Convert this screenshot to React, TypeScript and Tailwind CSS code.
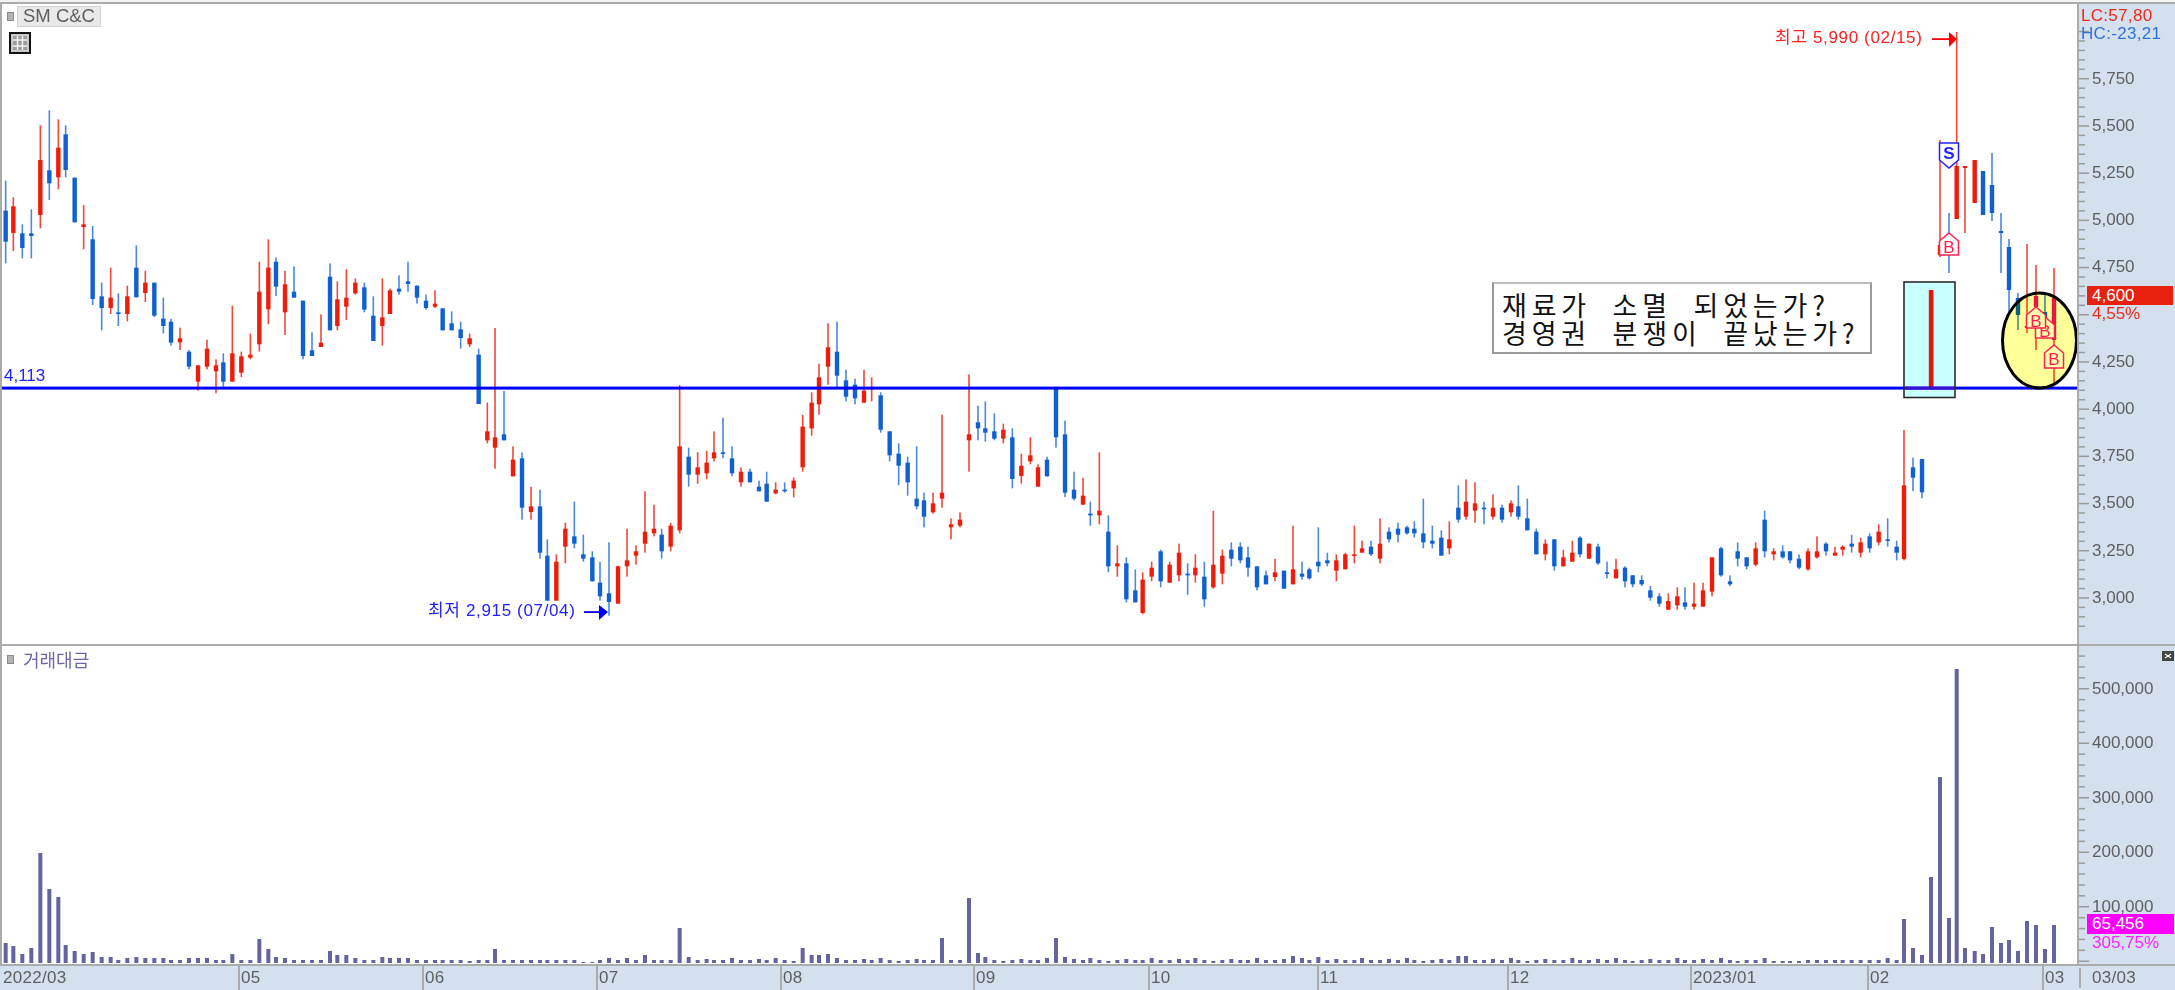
import React from "react";

type Row = number[];
type Candle = { x: number; h: number; t: number; b: number; l: number; c: number };

const seg = (ox: number, oy: number, rows: Row[]): Candle[] =>
  rows.map(([x, h, t, b, l, c]) => ({ x: ox + x / 3, h: oy + h / 3, t: oy + t / 3, b: oy + b / 3, l: oy + l / 3, c }));

const raw = (rows: Row[]): Candle[] => rows.map(([x, h, t, b, l, c]) => ({ x, h, t, b, l, c }));

const candles: Candle[] = [
  ...seg(0, 100, [
    [17,242,332,425,490,0],[40,292,319,399,453,1],[67,373,400,444,475,0],[94,328,400,408,475,0],[121,76,180,345,385,1],
    [148,31,211,250,300,0],[175,58,143,232,268,1],[197,76,103,210,232,0],[224,233,233,367,367,0],[251,315,373,381,448,1],
    [278,378,418,597,615,0],[305,548,589,624,691,0],[332,503,593,624,642,1],[355,580,637,641,678,0],[382,557,589,642,664,1],
    [409,436,503,592,592,0],[436,512,548,579,606,1],[463,548,548,647,651,0],[490,593,656,678,700,0],[513,656,665,728,737,0],
    [540,683,715,727,750,1],[567,750,755,800,808,0],[594,796,796,845,872,1],[621,719,746,800,808,1],[648,778,796,814,880,1],
    [670,760,787,845,860,0],[697,617,760,845,845,1],[724,755,769,818,831,1],[751,701,764,773,778,1],[778,485,575,733,755,1],
    [805,418,503,628,673,1],[828,472,485,560,588,0],[855,512,553,637,705,1],[882,499,575,593,593,0],[909,602,602,768,778,0],
    [936,697,751,768,768,0],[963,643,728,741,741,1],[990,490,530,691,691,0],[1012,544,598,678,691,1],[1039,508,593,620,660,1],
    [1066,535,548,580,584,1],[1093,548,562,629,637,0],[1120,589,647,723,723,0],[1147,535,652,678,737,1],[1170,566,571,642,642,1],
    [1197,526,566,575,584,0],[1224,485,544,552,575,0],[1251,557,557,593,611,0],[1278,584,602,624,629,0],[1305,571,611,620,624,1],
    [1328,625,625,691,691,0],[1355,634,670,691,691,0],[1382,665,688,714,746,0],[1409,701,715,733,741,1],[1436,746,764,912,912,0],
  ]),
  ...seg(440, 310, [
    [142,278,364,391,400,1],[165,54,382,413,476,1],[192,243,373,391,391,0],[219,409,449,499,499,1],[246,427,445,593,629,0],
    [273,530,589,606,629,1],[300,539,589,728,746,0],[322,688,737,872,872,0],[349,733,755,872,872,1],[376,638,656,710,760,1],
    [403,575,679,701,715,0],[430,674,733,746,755,0],[457,724,742,814,814,0],[480,755,818,859,872,0],[507,697,850,876,917,0],
    [534,767,769,881,881,1],[561,656,751,769,800,1],[588,706,724,737,764,1],[615,544,665,701,728,1],[642,584,656,670,679,1],
    [665,656,674,724,746,0],[692,638,647,710,724,1],[719,225,409,661,670,1],[746,413,440,494,530,0],[773,427,472,494,521,1],
    [800,422,458,490,508,1],[822,364,427,445,454,1],[849,323,427,431,445,0],[876,409,445,490,499,0],[903,472,485,517,530,1],
    [930,476,485,517,517,0],[957,512,530,544,544,0],[980,485,521,575,575,0],[1007,517,539,550,553,1],[1034,517,539,544,548,0],
    [1061,503,512,535,562,1],[1088,314,350,472,485,1],[1115,247,278,355,377,1],[1137,161,202,283,314,1],[1164,40,112,170,224,1],
    [1191,35,125,197,233,0],[1218,179,211,260,274,0],[1245,206,224,265,283,0],[1272,179,242,278,278,1],[1295,202,233,238,274,1],
    [1322,247,256,359,368,0],[1349,364,364,436,454,0],[1376,400,431,467,526,0],[1403,440,458,517,557,0],[1430,409,566,589,598,0],
    [1452,548,571,620,652,0],[1479,548,580,607,611,1],[1506,314,548,566,593,1],
  ]),
  ...seg(940, 350, [
    [33,505,523,532,568,1],[60,487,509,527,532,1],[87,73,253,271,365,1],[114,167,217,235,271,0],[136,154,235,248,275,0],
    [163,190,244,266,271,0],[190,221,239,266,280,1],[217,235,262,387,415,0],[244,311,347,378,401,1],[271,262,316,334,343,1],
    [294,343,352,410,410,1],[321,320,329,379,379,0],[348,113,113,262,293,0],[375,212,253,428,441,0],[402,365,419,446,451,0],
    [429,383,437,464,464,1],[451,455,491,496,527,0],[478,307,482,496,523,1],[505,496,545,649,667,0],[532,586,640,649,680,1],
    [559,622,640,748,757,0],[586,658,721,757,757,0],[608,667,689,789,793,1],[635,635,653,680,694,1],[662,599,604,694,712,0],
    [689,635,644,698,698,1],[717,581,608,676,694,1],[743,640,671,676,734,0],[766,613,653,676,698,1],[793,635,680,748,770,0],
    [820,482,644,712,716,1],[847,599,617,671,703,1],[874,577,599,626,649,0],[901,577,590,631,640,0],[924,590,622,653,680,0],
    [951,649,649,712,721,0],[978,662,676,703,703,0],[1005,626,667,681,694,1],[1032,662,662,716,716,0],[1059,527,658,703,703,1],
    [1086,635,671,680,689,0],[1108,653,658,685,689,0],[1135,532,635,649,667,0],[1162,608,631,640,649,0],[1189,613,631,662,694,1],
    [1216,608,613,658,658,1],[1243,527,613,617,640,1],[1266,572,595,608,608,1],[1293,572,590,613,618,0],[1320,505,581,626,640,1],
    [1347,532,545,568,577,0],[1374,518,536,554,577,0],[1401,527,532,550,554,0],[1423,514,536,550,563,0],[1450,446,550,577,595,0],
    [1477,527,572,581,595,0],[1504,541,563,617,617,0],[1528,514,568,595,613,1],
  ]),
  ...seg(1450, 460, [
    [25,76,143,179,188,0],[48,58,125,170,179,1],[75,67,130,152,188,1],[102,125,143,148,193,0],[129,103,143,170,179,1],
    [156,134,143,179,188,0],[183,121,130,157,170,1],[205,76,139,170,179,0],[232,116,175,211,211,0],[259,206,215,283,283,0],
    [286,238,251,283,301,1],[313,238,238,319,332,0],[340,269,292,319,319,1],[367,242,278,305,305,1],[390,229,233,283,292,0],
    [417,251,251,296,296,1],[444,251,260,310,314,0],[471,305,337,342,355,0],[498,296,328,355,355,1],[525,319,323,364,382,0],
    [548,346,346,373,382,0],[575,346,360,373,378,0],[601,378,391,413,422,0],[628,400,409,431,440,0],[655,400,423,449,449,1],
    [682,382,409,436,449,1],[705,382,427,440,449,0],[732,368,431,440,449,1],[759,368,391,440,440,1],[786,292,292,395,409,1],
    [813,260,265,346,350,0],[840,346,364,373,378,0],[863,247,274,296,319,0],[890,292,292,319,328,0],[917,247,265,314,319,1],
    [944,152,179,274,292,0],[971,265,274,283,301,1],[998,256,274,292,296,0],[1020,274,274,301,310,0],[1047,283,296,323,328,0],
    [1074,265,274,328,332,1],[1101,229,274,292,296,1],[1128,247,251,274,287,0],[1155,260,278,287,287,1],[1178,256,260,269,287,1],
    [1205,224,251,260,278,0],[1232,233,247,278,292,1],[1259,220,229,265,278,0],[1286,193,215,247,256,1],[1313,175,238,242,260,0],
    [1340,242,260,278,301,0],[1362,-90,76,297,301,1],[1389,-7,22,53,93,0],[1416,-3,-3,97,115,0],
  ]),
  ...raw([
    [1931,290,290,388,388,1],[1940,140,245,255,257,1],[1949,213,238,250,273,0],[1956.7,32,166,219,219,1],[1965,166,166,168,233,1],
    [1974.7,160,160,203,203,1],[1983,171,171,215,215,0],[1992,153,185,213,221,0],[2001,213,231,233,273,0],[2009,239,247,290,313,0],
    [2018,293,298,315,330,0],[2027,244,326,328,333,1],[2036,265,296,307,350,2],[2045,293,312,322,337,0],[2054,268,298,340,383,2],
  ]),
];

const volStart = [
  20,17,9,15,110,74,66,18,12,9,11,6,6,3,5,6,5,5,5,3,3,5,5,5,3,3,9,3,3,24,14,6,5,3,3,3,3,12,8,8,5,3,3,6,5,5,5,3,3,3,3,3,3,2,3,3,14,
  3,3,3,3,3,3,3,3,3,1,1,3,5,3,5,3,8,3,3,3,35,6,3,
];
const volByX: [number, number][] = [
  [802,15],[811,8],[821,8],[831,9],[840,5],[942,25],[968,65],[978,10],[987,6],[1055,25],[1065,6],[1290,7],[1317,6],[1460,7],[1469,7],
  [1755,3],[1764,5],[1773,2],[1782,2],[1790,2],[1799,2],[1808,3],[1817,3],[1826,3],[1835,3],[1843,3],[1852,3],[1861,3],[1870,3],[1879,3],[1888,5],[1897,3],
  [1904,44],[1913,15],[1922,8],[1931,86],[1940,186],[1949,45],[1957,294],[1966,15],[1975,12],[1984,9],[1993,36],[2002,20],[2009,23],[2018,12],[2027,42],[2036,38],[2045,14],[2054,38],
];
const smallVol = [3, 3, 4, 3, 5, 3, 2, 3, 4, 3, 3, 5];
const volumeOf = (c: Candle, i: number) => {
  if (i < volStart.length) return volStart[i];
  const hit = volByX.find(([x]) => Math.abs(x - c.x) < 4.4);
  return hit ? hit[1] : smallVol[i % smallVol.length];
};

const bodyColor = ["#1160d2", "#ee1c0a", "#e6186a"];
const wickColor = ["#4a88e2", "#f0493c", "#f0493c"];

const priceLabels = [
  ["5,750", 0], ["5,500", 1], ["5,250", 2], ["5,000", 3], ["4,750", 4], ["4,250", 6], ["4,000", 7],
  ["3,750", 8], ["3,500", 9], ["3,250", 10], ["3,000", 11],
] as [string, number][];
const priceTicks = Array.from({ length: 64 }, (_, k) => ({ y: 30.8 + k * 9.44, major: k % 5 === 0 })).filter((t) => t.y < 642);
const volLabels = [["500,000", 688], ["400,000", 742.5], ["300,000", 797], ["200,000", 851.5], ["100,000", 906]] as [string, number][];
const volTicks = Array.from({ length: 31 }, (_, k) => ({ y: 655.3 + k * 10.9, major: (k - 3) % 5 === 0 }));

const dateCells: [string, number][] = [
  ["2022/03", 238], ["05", 184], ["06", 174], ["07", 184], ["08", 193], ["09", 175], ["10", 169], ["11", 190], ["12", 183], ["2023/01", 177], ["02", 175], ["03", 37],
];

function Marker({ x, top, h, label, kind, fill }: { x: number; top: number; h: number; label: string; kind: "S" | "B"; fill: string }) {
  const w = 9.5;
  const tip = 8;
  const col = kind === "S" ? "#2222ff" : "#ff2050";
  const points =
    kind === "S"
      ? `${x - w},${top} ${x + w},${top} ${x + w},${top + h - tip} ${x},${top + h} ${x - w},${top + h - tip}`
      : `${x},${top} ${x + w},${top + tip} ${x + w},${top + h} ${x - w},${top + h} ${x - w},${top + tip}`;
  return (
    <g>
      <polygon points={points} fill={fill} stroke={col} strokeWidth="1.5" />
      <text x={x} y={kind === "S" ? top + 10 : top + 14} textAnchor="middle" dominantBaseline="central" fontSize="17" fontWeight={kind === "S" ? 700 : 400} fill={col}>
        {label}
      </text>
    </g>
  );
}

function LegendDot() {
  return <span className="block w-[7px] h-[9px] bg-[#b4b4b4] border border-[#8a8a8a]" />;
}

export default function App() {
  return (
    <div className="w-[2175px] h-[990px] flex flex-col overflow-hidden bg-[#d5e0ef] text-[#5f5f5f] text-[17px] [font-family:'Liberation_Sans','Noto_Sans_CJK_KR',sans-serif]">
      <div className="h-[2px] bg-[#f2f2f2]" />
      <div className="h-[2px] bg-[#ababab]" />

      {/* price pane */}
      <div className="flex h-[640px]">
        <div className="relative w-[2079px] bg-white border-l-2 border-r-2 border-[#ababab]">
          <svg width="2075" height="640" viewBox="2 4 2075 640" className="block">
            <rect x="1905" y="283" width="50" height="114" fill="#c8ffff" />
            {candles.map((c, i) => (
              <g key={i}>
                <rect x={c.x - 0.8} y={c.h} width="1.6" height={Math.max(c.l - c.h, 1)} fill={wickColor[c.c]} />
                <rect x={c.x - 2.2} y={c.t} width="4.4" height={Math.max(c.b - c.t, 1.6)} fill={bodyColor[c.c]} />
              </g>
            ))}
            <rect x="2" y="386.6" width="2075" height="3" fill="#0000ff" />
            <rect x="1905" y="386.6" width="50" height="3" fill="#3d10d2" />
            <rect x="1929" y="290" width="4.4" height="96" fill="#dd1a10" />
            <rect x="1904" y="282" width="51" height="115.5" fill="none" stroke="#2b2b2b" strokeWidth="1.6" />
            <ellipse cx="2039.5" cy="340.5" rx="37" ry="47.5" fill="#ffff99" stroke="#000000" strokeWidth="3" className="mix-blend-multiply" />

            <text x="4" y="375" dominantBaseline="central" fontSize="17" fill="#2222ff">4,113</text>
            <text x="1775" y="37" dominantBaseline="central" fontSize="17" letterSpacing="0.65" fill="#ff2020">최고 5,990 (02/15)</text>
            <rect x="1932" y="38.2" width="18" height="1.8" fill="#ff0000" />
            <polygon points="1949,32 1957,39 1949,47" fill="#ff0000" />
            <text x="428" y="610" dominantBaseline="central" fontSize="17" letterSpacing="0.65" fill="#2222ff">최저 2,915 (07/04)</text>
            <rect x="584" y="611.2" width="16" height="1.8" fill="#0000ff" />
            <polygon points="599,605 608,612 599,620" fill="#0000ff" />

            <Marker x={1949} top={143} h={25} label="S" kind="S" fill="#ffffff" />
            <Marker x={1949} top={233} h={22} label="B" kind="B" fill="#ffffff" />
            <Marker x={2045} top={317} h={21} label="B" kind="B" fill="#ffffb0" />
            <Marker x={2036} top={307} h={21} label="B" kind="B" fill="#ffffb0" />
            <Marker x={2054} top={345} h={23} label="B" kind="B" fill="#ffffb0" />
          </svg>

          <div className="absolute top-[2px] left-[5px] flex items-center gap-[3px]">
            <LegendDot />
            <span className="h-[21px] px-[5px] flex items-center bg-[#e9e9e9] border border-[#d2d2d2] text-[18.5px] leading-none">SM C&amp;C</span>
          </div>
          <svg width="22" height="22" viewBox="0 0 22 22" className="absolute top-[28px] left-[7px]">
            <rect x="1" y="1" width="20" height="20" fill="#c9c9c9" stroke="#111111" strokeWidth="2" />
            <rect x="4" y="4" width="14" height="14" fill="#9c9c9c" />
            <path d="M4 8h14M4 14h14M8.5 4v14M13.5 4v14" stroke="#f2f2f2" strokeWidth="1.4" />
          </svg>

          <div className="absolute top-[278px] left-[1490px] w-[380px] h-[72px] flex flex-col justify-center pl-[8px] pt-[2px] bg-white border-2 border-[#9a9a9a] border-t-[#bbbbbb] text-[#111111] text-[27px] leading-[28px] tracking-[4.8px] whitespace-pre [font-family:'Noto_Sans_CJK_KR',sans-serif]">
            <span>재료가  소멸  되었는가?</span>
            <span>경영권  분쟁이  끝났는가?</span>
          </div>
        </div>

        <div className="relative flex-1">
          <svg width="96" height="640" viewBox="2079 4 96 640" className="block">
            {priceTicks.map((t, i) => (
              <rect key={i} x="2079" y={t.y} width={t.major ? 10 : 6} height="1.5" fill="#9a9a9a" />
            ))}
            {priceLabels.map(([s, k]) => (
              <text key={s} x="2092" y={78 + k * 47.2} dominantBaseline="central" fill="#5f5f5f">{s}</text>
            ))}
            <text x="2081" y="15" dominantBaseline="central" letterSpacing="0.3" fill="#ee2a1a">LC:57,80</text>
            <text x="2081" y="33" dominantBaseline="central" letterSpacing="0.3" fill="#2f72d8">HC:-23,21</text>
          </svg>
          <div className="absolute top-[282px] left-[8px] w-[86px] h-[19px] flex items-center pl-[5px] bg-[#e8200f] text-white">4,600</div>
          <div className="absolute top-[301px] left-[13px] text-[#ee2a1a] leading-[18px]">4,55%</div>
        </div>
      </div>

      <div className="h-[2px] bg-[#ababab]" />

      {/* volume pane */}
      <div className="flex h-[318px]">
        <div className="relative w-[2079px] bg-white border-l-2 border-r-2 border-[#ababab]">
          <svg width="2075" height="318" viewBox="2 646 2075 318" className="block">
            {candles.map((c, i) => {
              const v = volumeOf(c, i);
              return <rect key={i} x={c.x - 2} y={963 - v} width="4" height={v} fill="#64649e" />;
            })}
          </svg>
          <div className="absolute top-[3px] left-[5px] flex items-center gap-[9px] text-[#6a6aa8] text-[18px] leading-[20px]">
            <LegendDot />
            <span className="[font-family:'Noto_Sans_CJK_KR',sans-serif]">거래대금</span>
          </div>
        </div>
        <div className="relative flex-1">
          <svg width="96" height="318" viewBox="2079 646 96 318" className="block">
            {volTicks.map((t, i) => (
              <rect key={i} x="2079" y={t.y} width={t.major ? 10 : 6} height="1.5" fill="#9a9a9a" />
            ))}
            {volLabels.map(([s, y]) => (
              <text key={s} x="2092" y={y} dominantBaseline="central" fill="#5f5f5f">{s}</text>
            ))}
          </svg>
          <svg width="12" height="10" viewBox="0 0 12 10" className="absolute top-[5px] left-[83px]">
            <rect width="12" height="10" fill="#444444" />
            <path d="M3 3l6 4M3 7l6-4" stroke="#ffffff" strokeWidth="1.2" />
          </svg>
          <div className="absolute top-[268px] left-[8px] w-[87px] h-[20px] flex items-center pl-[5px] bg-[#ff00ff] text-white">65,456</div>
          <div className="absolute top-[288px] left-[13px] text-[#ff22ff] leading-[18px]">305,75%</div>
        </div>
      </div>

      {/* date axis */}
      <div className="flex h-[26px] border-t-2 border-[#ababab] items-stretch tracking-[0.3px]">
        {dateCells.map(([label, w], i) => (
          <div key={label} className={`flex items-center ${i === 0 ? "pl-[3px]" : "pl-px border-l-2 border-[#ababab]"}`} style={{ width: w }}>
            {label}
          </div>
        ))}
        <div className="flex-1 my-[2px] flex items-center pl-[11px] border-l-2 border-[#ababab]">03/03</div>
      </div>
    </div>
  );
}
